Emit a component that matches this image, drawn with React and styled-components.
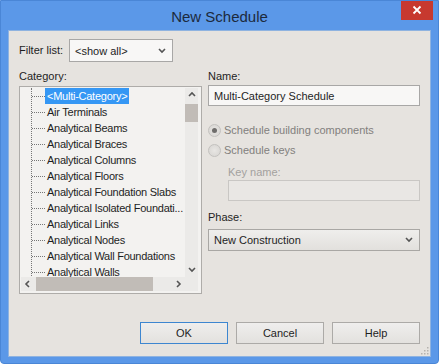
import React from 'react';
import styled, { createGlobalStyle } from 'styled-components';

const GlobalStyle = createGlobalStyle`
  html, body {
    margin: 0;
    padding: 0;
    background: #ffffff;
  }
  body {
    font-family: "Liberation Sans", Arial, sans-serif;
    font-size: 11px;
    color: #1e1e1e;
  }
`;

const Window = styled.div`
  width: 439px;
  height: 364px;
  box-sizing: border-box;
  background: #5b98e8;
  border: 1px solid #4a86d6;
  border-radius: 0 0 4px 4px;
  display: flex;
  flex-direction: column;
  overflow: hidden;
`;

const TitleBar = styled.div`
  height: 29px;
  display: flex;
  align-items: center;
  justify-content: center;
  position: relative;
  flex-shrink: 0;
`;

const Title = styled.div`
  font-size: 15px;
  color: #1c2a3d;
  margin-top: 2px;
`;

const CloseButton = styled.div`
  position: absolute;
  top: -1px;
  right: 5px;
  width: 32px;
  height: 20px;
  background: #c7392f;
  display: flex;
  align-items: center;
  justify-content: center;
`;

const Client = styled.div`
  flex: 1;
  margin: 0 7px 6px 7px;
  background: #e6e3df;
  border: 1px solid #8fb3e0;
  padding: 8px 10px 0 10px;
  display: flex;
  flex-direction: column;
  position: relative;
`;

const FilterRow = styled.div`
  display: flex;
  align-items: center;
  gap: 6px;
  height: 23px;
`;

const Label = styled.div`
  color: ${p => (p.$disabled ? '#a3a19e' : '#1e1e1e')};
  line-height: 13px;
`;

const Combo = styled.div`
  width: ${p => p.$width || '100%'};
  height: ${p => p.$height || 23}px;
  box-sizing: border-box;
  border: 1px solid ${p => (p.$button ? '#a9a7a4' : '#a8a7a6')};
  background: ${p => (p.$button ? 'linear-gradient(#efeeec, #e2e0dd)' : '#f8f7f6')};
  display: flex;
  align-items: center;
  justify-content: space-between;
  padding: 0 6px 0 5px;
  font-size: 11px;
`;

const Columns = styled.div`
  display: flex;
  gap: 6px;
  margin-top: 8px;
`;

const LeftCol = styled.div`
  width: 183px;
  display: flex;
  flex-direction: column;
`;

const RightCol = styled.div`
  flex: 1;
  display: flex;
  flex-direction: column;
`;

const ListBox = styled.div`
  margin-top: 3px;
  height: 208px;
  box-sizing: border-box;
  border: 1px solid #aeaca9;
  padding: 1px 3px 2px 1px;
  display: grid;
  grid-template-columns: 1fr 13px;
  grid-template-rows: 1fr 14px;
  background: #f3f2f0;
`;

const TreeArea = styled.div`
  overflow: hidden;
  position: relative;
  padding-left: 10px;
`;

const TreeLine = styled.div`
  border-left: 1px dotted #777;
  margin-top: 8px;
`;

const TreeItem = styled.div`
  height: 16px;
  display: flex;
  align-items: center;
  margin-top: ${p => (p.$first ? '-8px' : '0')};
  white-space: nowrap;
  &::before {
    content: '';
    width: 13px;
    border-top: 1px dotted #777;
    flex-shrink: 0;
  }
`;

const ItemText = styled.span`
  font-size: 11px;
  letter-spacing: -0.25px;
  padding: 1px 2px;
  line-height: 14px;
  background: ${p => (p.$selected ? '#3597f4' : 'transparent')};
  color: ${p => (p.$selected ? '#ffffff' : '#1e1e1e')};
`;

const VScroll = styled.div`
  background: #ebeae8;
  display: flex;
  flex-direction: column;
  align-items: center;
`;

const VThumb = styled.div`
  width: 13px;
  height: 18px;
  background: #c1bcb7;
  margin-top: 2px;
`;

const ArrowBox = styled.div`
  width: 13px;
  height: 14px;
  display: flex;
  align-items: center;
  justify-content: center;
  flex-shrink: 0;
`;

const HScroll = styled.div`
  background: #ebeae8;
  display: flex;
  align-items: center;
`;

const HThumb = styled.div`
  height: 14px;
  width: 117px;
  background: #c1bcb7;
  margin-left: 2px;
`;

const Corner = styled.div`
  background: #ebeae8;
`;

const Spacer = styled.div`
  flex: ${p => (p.$grow ? 1 : 'none')};
  height: ${p => p.$h || 0}px;
`;

const TextInput = styled.div`
  height: 21px;
  box-sizing: border-box;
  border: 1px solid ${p => (p.$disabled ? '#c9c7c4' : '#a8a7a6')};
  background: ${p => (p.$disabled ? '#e9e7e4' : '#f8f7f6')};
  display: flex;
  align-items: center;
  padding: 0 5px;
  font-size: 11px;
  margin-left: ${p => p.$indent || 0}px;
  margin-top: ${p => p.$top || 0}px;
`;

const SubLabel = styled(Label)`
  margin-left: ${p => p.$indent || 0}px;
  margin-top: ${p => p.$top || 0}px;
`;

const Radio = styled.div`
  display: flex;
  align-items: center;
  gap: 3px;
  height: 16px;
  color: #82807d;
  font-size: 11px;
`;

const RadioCircle = styled.div`
  width: 11px;
  height: 11px;
  border-radius: 50%;
  border: 1px solid #c3c1be;
  background: radial-gradient(circle, #e8e6e3, #d6d4d1);
  display: flex;
  align-items: center;
  justify-content: center;
  &::after {
    content: '';
    display: ${p => (p.$checked ? 'block' : 'none')};
    width: 5px;
    height: 5px;
    border-radius: 50%;
    background: #6f6d6b;
  }
`;

const PhaseCombo = styled(Combo)`
  margin-top: 5px;
`;

const ButtonRow = styled.div`
  display: flex;
  justify-content: flex-end;
  gap: 8px;
  margin-top: auto;
  margin-bottom: 12px;
`;

const Button = styled.div`
  width: 88px;
  height: 22px;
  box-sizing: border-box;
  border: 1px solid ${p => (p.$default ? '#3d86d0' : '#acaaa7')};
  background: linear-gradient(#efeeed, #e3e1de);
  display: flex;
  align-items: center;
  justify-content: center;
  font-size: 11px;
`;

const Grip = styled.div`
  position: absolute;
  right: 1px;
  bottom: 1px;
  width: 10px;
  height: 10px;
`;

const Chevron = ({ dir = 'down', color = '#555' }) => {
  const pts = {
    down: '1,2 4,5 7,2',
    up: '1,5 4,2 7,5',
    left: '5,1 2,4 5,7',
    right: '2,1 5,4 2,7',
  }[dir];
  return (
    <svg width="8" height="8" viewBox="0 0 8 8">
      <polyline points={pts} fill="none" stroke={color} strokeWidth="1.6" />
    </svg>
  );
};

const categories = [
  '<Multi-Category>',
  'Air Terminals',
  'Analytical Beams',
  'Analytical Braces',
  'Analytical Columns',
  'Analytical Floors',
  'Analytical Foundation Slabs',
  'Analytical Isolated Foundati...',
  'Analytical Links',
  'Analytical Nodes',
  'Analytical Wall Foundations',
  'Analytical Walls',
];

export default function App() {
  return (
    <>
      <GlobalStyle />
      <Window>
        <TitleBar>
          <Title>New Schedule</Title>
          <CloseButton>
            <svg width="10" height="10" viewBox="0 0 10 10">
              <path d="M1.5 1.5 L8.5 8.5 M8.5 1.5 L1.5 8.5" stroke="#fff" strokeWidth="1.8" />
            </svg>
          </CloseButton>
        </TitleBar>
        <Client>
          <FilterRow>
            <Label>Filter list:</Label>
            <Combo $width="104px">
              <span>&lt;show all&gt;</span>
              <Chevron />
            </Combo>
          </FilterRow>
          <Columns>
            <LeftCol>
              <Label>Category:</Label>
              <ListBox>
                <TreeArea>
                  <TreeLine>
                    {categories.map((c, i) => (
                      <TreeItem key={c} $first={i === 0}>
                        <ItemText $selected={i === 0}>{c}</ItemText>
                      </TreeItem>
                    ))}
                  </TreeLine>
                </TreeArea>
                <VScroll>
                  <ArrowBox><Chevron dir="up" /></ArrowBox>
                  <VThumb />
                  <Spacer $grow />
                  <ArrowBox><Chevron dir="down" /></ArrowBox>
                </VScroll>
                <HScroll>
                  <ArrowBox><Chevron dir="left" /></ArrowBox>
                  <HThumb />
                  <Spacer $grow />
                  <ArrowBox><Chevron dir="right" /></ArrowBox>
                </HScroll>
                <Corner />
              </ListBox>
            </LeftCol>
            <RightCol>
              <Label>Name:</Label>
              <TextInput $top={2}>Multi-Category Schedule</TextInput>
              <Spacer $h={16} />
              <Radio>
                <RadioCircle $checked />
                Schedule building components
              </Radio>
              <Spacer $h={4} />
              <Radio>
                <RadioCircle />
                Schedule keys
              </Radio>
              <SubLabel $disabled $indent={20} $top={8}>Key name:</SubLabel>
              <TextInput $disabled $indent={20} $top={1} />
              <SubLabel $top={10}>Phase:</SubLabel>
              <PhaseCombo $button $height={22}>
                <span>New Construction</span>
                <Chevron />
              </PhaseCombo>
            </RightCol>
          </Columns>
          <ButtonRow>
            <Button $default>OK</Button>
            <Button>Cancel</Button>
            <Button>Help</Button>
          </ButtonRow>
          <Grip>
            <svg width="10" height="10" viewBox="0 0 10 10">
              {[[8, 2], [8, 5], [5, 5], [8, 8], [5, 8], [2, 8]].map(([x, y]) => (
                <rect key={`${x}-${y}`} x={x} y={y} width="1.5" height="1.5" fill="#b5b2ae" />
              ))}
            </svg>
          </Grip>
        </Client>
      </Window>
    </>
  );
}
